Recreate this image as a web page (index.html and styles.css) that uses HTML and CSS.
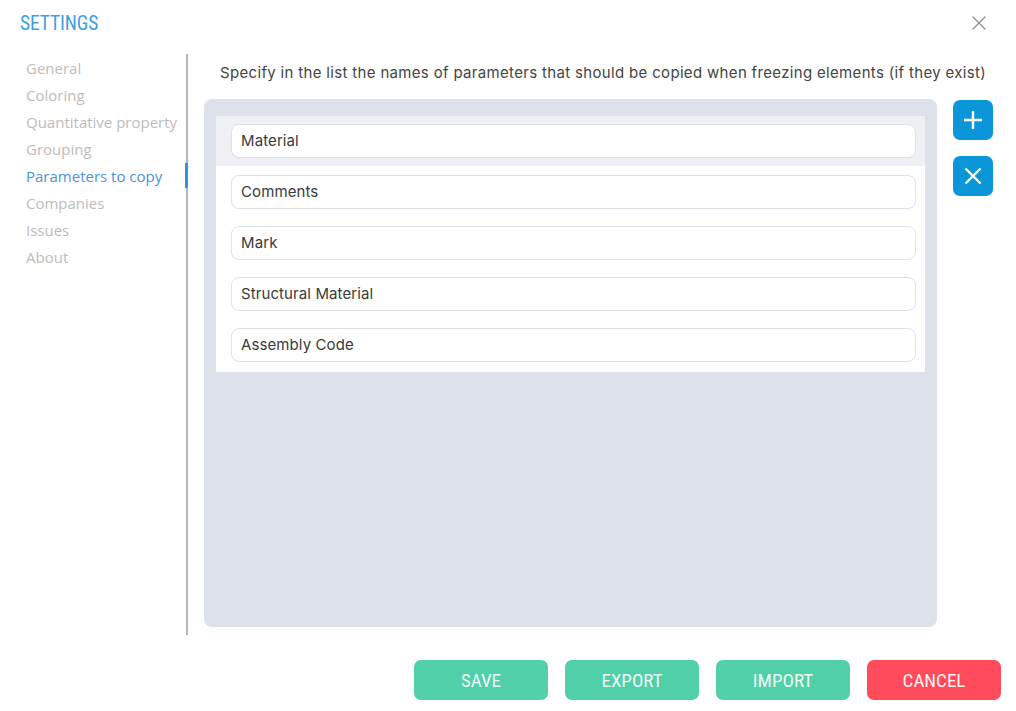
FILE: index.html
```html
<!DOCTYPE html>
<html>
<head>
<meta charset="utf-8">
<link rel="stylesheet" href="styles.css">
</head>
<body>
<div class="dialog">
  <header class="header">
    <h1 class="title">SETTINGS</h1>
    <button class="close" aria-label="Close">
      <svg width="16" height="16" viewBox="0 0 16 16"><path d="M1.5 1.5 L14.5 14.5 M14.5 1.5 L1.5 14.5" stroke="#8d939c" stroke-width="1.4" fill="none"/></svg>
    </button>
  </header>
  <div class="main">
    <nav class="sidebar">
      <a class="nav-item">General</a>
      <a class="nav-item">Coloring</a>
      <a class="nav-item">Quantitative property</a>
      <a class="nav-item">Grouping</a>
      <a class="nav-item active">Parameters to copy</a>
      <a class="nav-item">Companies</a>
      <a class="nav-item">Issues</a>
      <a class="nav-item">About</a>
    </nav>
    <section class="content">
      <p class="desc">Specify in the list the names of parameters that should be copied when freezing elements (if they exist)</p>
      <div class="editor">
        <div class="panel">
          <ul class="list">
            <li class="row selected"><div class="field">Material</div></li>
            <li class="row"><div class="field">Comments</div></li>
            <li class="row"><div class="field">Mark</div></li>
            <li class="row"><div class="field">Structural Material</div></li>
            <li class="row"><div class="field">Assembly Code</div></li>
          </ul>
        </div>
        <div class="tools">
          <button class="tool" aria-label="Add">
            <svg width="22" height="22" viewBox="0 0 22 22"><path d="M11 2 V20 M2 11 H20" stroke="#fff" stroke-width="2.4" fill="none"/></svg>
          </button>
          <button class="tool" aria-label="Remove">
            <svg width="22" height="22" viewBox="0 0 22 22"><path d="M3.5 3.5 L18.5 18.5 M18.5 3.5 L3.5 18.5" stroke="#fff" stroke-width="2.4" fill="none"/></svg>
          </button>
        </div>
      </div>
    </section>
  </div>
  <footer class="footer">
    <button class="btn green">SAVE</button>
    <button class="btn green">EXPORT</button>
    <button class="btn green">IMPORT</button>
    <button class="btn red">CANCEL</button>
  </footer>
</div>
</body>
</html>
```
FILE: styles.css
```css
* { box-sizing: border-box; }
html, body { margin: 0; padding: 0; background: #fff; }
.dialog { width: 1016px; height: 711px; display: flex; flex-direction: column; }
.header { height: 54px; display: flex; justify-content: space-between; align-items: flex-start; padding: 0 29px 0 20px; }
.title {
  margin: 11px 0 0 0;
  font-family: "Liberation Sans Narrow", "Roboto Condensed", Roboto, sans-serif;
  font-weight: 400; font-size: 19.5px; line-height: 26px; color: #3d9fe0; letter-spacing: -0.1px;
}
.close { margin-top: 15px; background: none; border: 0; padding: 0; width: 16px; height: 16px; }
.main { display: flex; height: 581px; }
.sidebar {
  width: 188px; border-right: 2px solid #b4b4b4; padding-top: 1px;
  display: flex; flex-direction: column;
  font-family: "Open Sans", "Noto Sans", sans-serif; font-size: 15px;
}
.nav-item { display: block; height: 27px; line-height: 27px; padding-left: 26px; color: #bcbcbc; position: relative; white-space: nowrap; }
.nav-item.active { color: #4a93db; }
.nav-item.active::after { content: ""; position: absolute; right: -2px; top: 0; width: 3px; height: 25px; background: #3591e0; }
.content { flex: 1; padding-left: 16px; }
.desc {
  margin: 9px 0 0 16px; height: 36px; line-height: 20px;
  font-family: Inter, "Noto Sans", sans-serif; font-size: 15px; color: #444; letter-spacing: 0.33px; white-space: nowrap;
}
.editor { display: flex; gap: 16px; }
.panel { width: 733px; height: 528px; background: #dde1e9; border-radius: 8px; padding: 17px 12px; }
.list { list-style: none; margin: 0; padding: 0 0 2px 0; background: #fff; }
.row { height: 51px; padding: 9px 9px 8px 15px; }
.row.selected { background: #eef0f4; height: 50px; padding-top: 8px; }
.field {
  height: 34px; border: 1px solid #dde1ea; border-radius: 8px; background: #fff;
  padding-left: 9px; line-height: 32px;
  font-family: Inter, "Noto Sans", sans-serif; font-size: 15px; color: #3a3a3a; letter-spacing: 0.1px;
}
.tools { display: flex; flex-direction: column; gap: 16px; padding-top: 1px; }
.tool { width: 40px; height: 40px; border: 0; border-radius: 7px; background: #0b96d9; display: flex; align-items: center; justify-content: center; padding: 0; }
.footer { display: flex; justify-content: flex-end; gap: 17px; padding: 25px 15px 0 0; }
.btn {
  width: 134px; height: 40px; border: 0; border-radius: 7px; color: #eefaf5;
  font-family: "Liberation Sans Narrow", "Roboto Condensed", Roboto, sans-serif; font-size: 19px; padding: 0;
}
.green { background: #50cfa8; }
.red { background: #ff4b5c; color: #fff2f3; }
```
